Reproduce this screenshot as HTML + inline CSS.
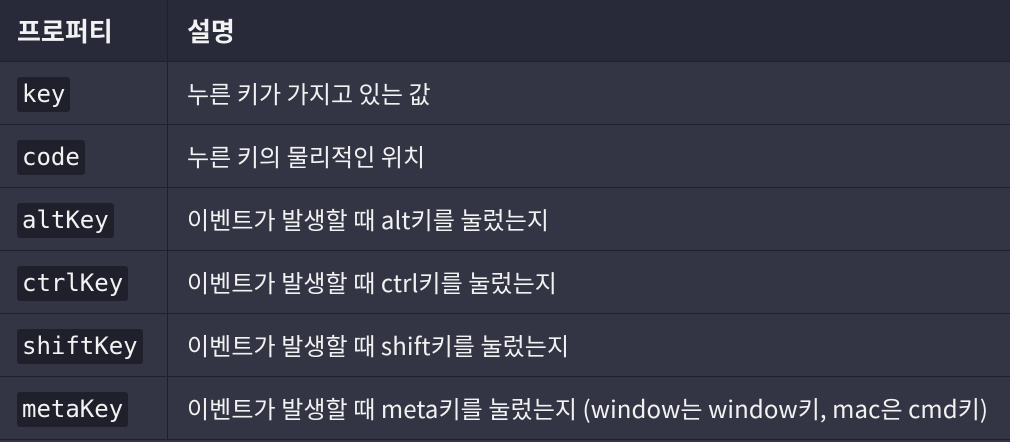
<!DOCTYPE html>
<html><head><meta charset="utf-8"><style>
body{margin:0;width:1010px;height:442px;background:#333544;overflow:hidden;font-family:"Noto Sans CJK KR","Liberation Sans",sans-serif;color:#f2f2f2}
table{border-collapse:collapse;width:1010px}
td,th{padding:0 0 0 17px;text-align:left;border-bottom:1px solid #1f202b;height:62px;line-height:1}
th{background:#282939;font-size:26px;font-weight:bold;height:61px}
td{font-size:24px;background:#333544;letter-spacing:0.1px}
td:first-child,th:first-child{width:150px;border-right:1px solid #1f202b}
td:nth-child(2),th:nth-child(2){padding-left:19px}
code{font-family:"DejaVu Sans Mono",monospace;background:#1f202c;padding:4px 5px;border-radius:3px;font-size:24px;letter-spacing:0;display:inline-block;line-height:27px;margin-top:3px}
</style></head><body>
<table>
<tr><th>프로퍼티</th><th>설명</th></tr>
<tr><td><code>key</code></td><td>누른 키가 가지고 있는 값</td></tr>
<tr><td><code>code</code></td><td>누른 키의 물리적인 위치</td></tr>
<tr><td><code>altKey</code></td><td>이벤트가 발생할 때 alt키를 눌렀는지</td></tr>
<tr><td><code>ctrlKey</code></td><td>이벤트가 발생할 때 ctrl키를 눌렀는지</td></tr>
<tr><td><code>shiftKey</code></td><td>이벤트가 발생할 때 shift키를 눌렀는지</td></tr>
<tr><td><code>metaKey</code></td><td>이벤트가 발생할 때 meta키를 눌렀는지 (window는 window키, mac은 cmd키)</td></tr>
</table>
</body></html>
